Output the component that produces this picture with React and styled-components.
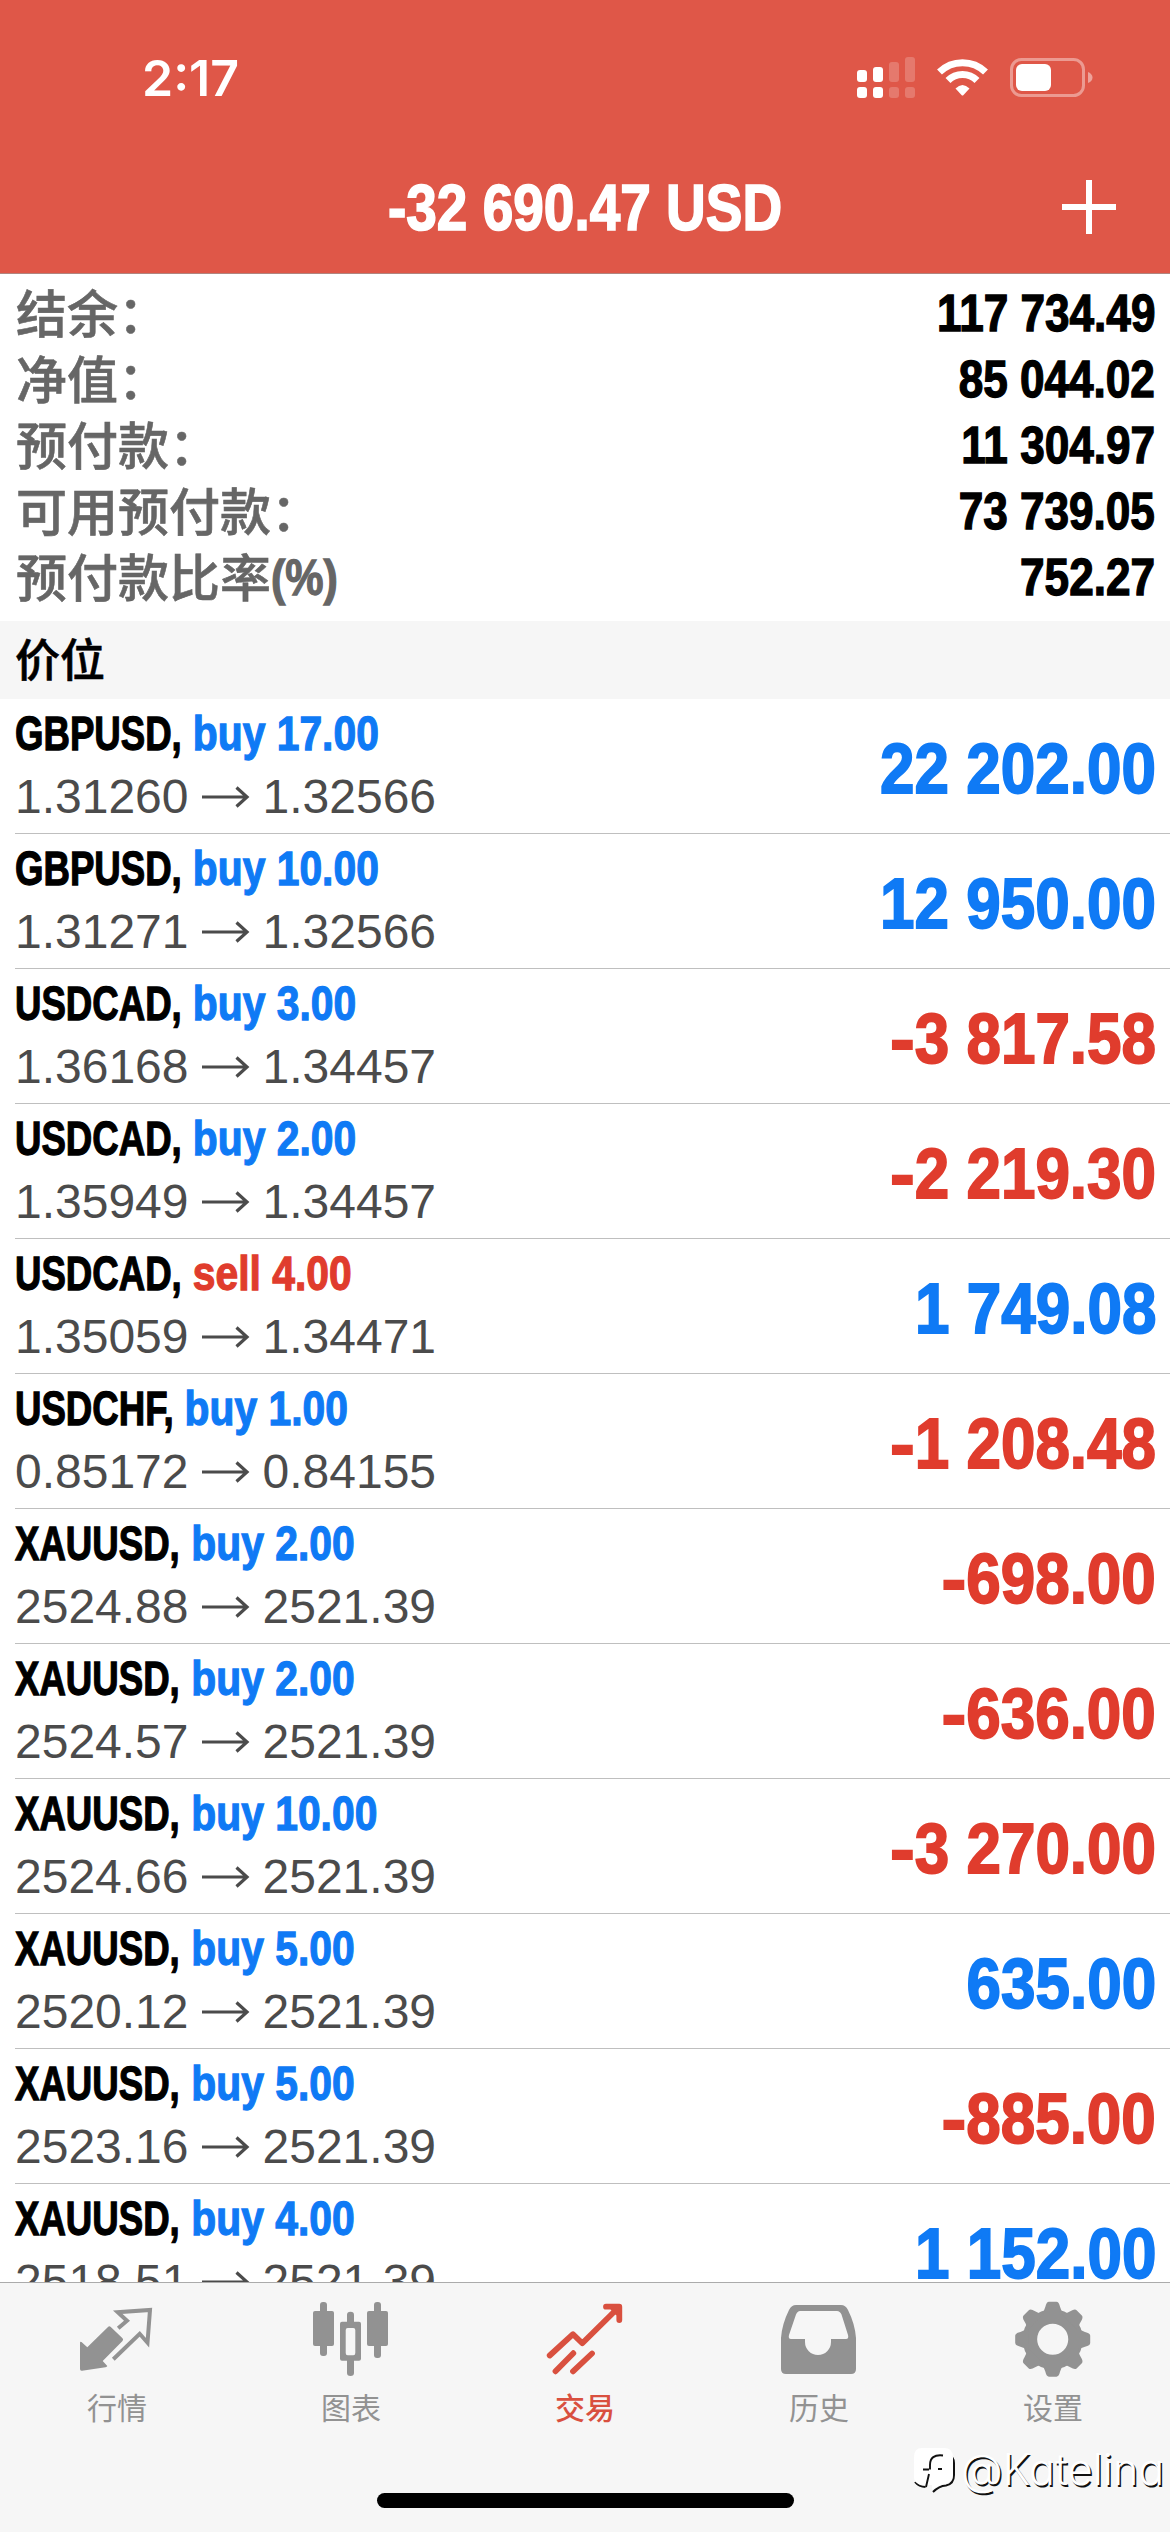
import React from 'react';
import styled, { createGlobalStyle } from 'styled-components';

const GlobalStyle = createGlobalStyle`
  * {
    box-sizing: border-box;
  }
  body {
    margin: 0;
    background: #fff;
    font-family: "Liberation Sans", "Noto Sans CJK SC", sans-serif;
  }
`;

const colors = {
  header: '#df5748',
  blue: '#0f7af5',
  red: '#e03c2d',
  grey: '#929292',
};

const Screen = styled.div`
  width: 1170px;
  height: 2532px;
  display: flex;
  flex-direction: column;
  overflow: hidden;
  background: #fff;
`;

/* Helvetica condensed look, squeezed from the regular width */
const Condensed = styled.span`
  display: inline-block;
  font-family: "Liberation Sans", sans-serif;
  font-weight: 700;
  white-space: nowrap;
  -webkit-text-stroke: 0.026em currentColor;
  transform: scaleX(${props => props.$scale || 0.85});
  transform-origin: ${props => props.$origin || 'left'} center;
`;

const Header = styled.header`
  flex: none;
  height: 274px;
  background: ${colors.header};
  border-bottom: 1px solid #b0857f;
  color: #fff;
`;

const StatusBar = styled.div`
  display: flex;
  justify-content: space-between;
  align-items: center;
  height: 156px;
  padding: 0 76px 0 142px;
`;

const Clock = styled.span`
  font-family: Inter, sans-serif;
  font-size: 50px;
  font-weight: 600;
  line-height: 60px;
`;

const StatusIcons = styled.svg`
  width: 240px;
  height: 48px;
`;

const TitleBar = styled.div`
  display: grid;
  grid-template-columns: 1fr auto 1fr;
  align-items: center;
  height: 104px;
  padding: 0 53px;
`;

const Title = styled(Condensed)`
  grid-column: 2;
  font-size: 65px;
  line-height: 80px;
`;

const AddIcon = styled.svg`
  justify-self: end;
  width: 56px;
  height: 56px;
`;

const Summary = styled.section`
  flex: none;
  height: 347px;
  padding: 7px 15px 0 16px;
`;

const SummaryRow = styled.div`
  display: flex;
  justify-content: space-between;
  height: 66px;
  line-height: 66px;
`;

const SummaryLabel = styled.span`
  display: flex;
  height: 66px;
  font-family: "Noto Sans CJK SC", sans-serif;
  font-size: 51px;
  font-weight: 500;
  line-height: 60px;
  color: #666;
  -webkit-text-stroke: 0.6px currentColor;
`;

const Percent = styled(Condensed)`
  font-size: 50px;
  line-height: 66px;
`;

const SummaryValue = styled(Condensed)`
  font-size: 51px;
  color: #000;
`;

const SectionTitle = styled.h2`
  flex: none;
  height: 78px;
  margin: 0;
  padding-left: 15px;
  background: #f6f6f6;
  font-family: "Noto Sans CJK SC", sans-serif;
  font-size: 45px;
  font-weight: 500;
  line-height: 74px;
  color: #000;
  -webkit-text-stroke: 0.6px currentColor;
`;

const Positions = styled.main`
  height: 1583px;
  overflow: hidden;
`;

const Position = styled.div`
  display: flex;
  justify-content: space-between;
  height: 135px;
  margin-left: 15px;
  padding-right: 14px;
  border-bottom: 1px solid #bfbfbf;
`;

const Details = styled.div`
  display: flex;
  flex-direction: column;
  padding-top: 4px;
`;

const Deal = styled(Condensed)`
  font-size: 49px;
  line-height: 60px;
  color: #000;
`;

const Side = styled.span`
  display: inline-block;
  margin-left: 15px;
  transform: scaleX(1.115);
  transform-origin: left center;
  color: ${props => (props.$sell ? colors.red : colors.blue)};
`;

const Prices = styled.div`
  display: flex;
  align-items: center;
  font-size: 48px;
  line-height: 68px;
  color: #4b4b4b;
`;

const Arrow = styled.svg`
  width: 74px;
  height: 24px;
`;

const Profit = styled(Condensed)`
  font-size: 71px;
  line-height: 139px;
  color: ${props => (props.$loss ? colors.red : colors.blue)};
`;

const Minus = styled.span`
  display: inline-block;
  transform: scaleX(1.2);
  transform-origin: right center;
`;

const TabBar = styled.nav`
  flex: none;
  display: grid;
  grid-template-columns: repeat(5, 1fr);
  height: 250px;
  padding-top: 17px;
  background: #f6f6f6;
  border-top: 1px solid #ababab;
`;

const Tab = styled.div`
  display: flex;
  flex-direction: column;
  align-items: center;
  height: 130px;
  font-family: "Noto Sans CJK SC", sans-serif;
  font-size: 30px;
  font-weight: ${props => (props.$active ? 500 : 400)};
  line-height: 52px;
  color: ${props => (props.$active ? '#d9503f' : colors.grey)};
`;

const TabIcon = styled.svg`
  flex: none;
  width: 80px;
  height: 80px;
`;

const HomeIndicator = styled.div`
  grid-column: 1 / -1;
  justify-self: center;
  align-self: end;
  width: 417px;
  height: 15px;
  margin-bottom: 24px;
  border-radius: 8px;
  background: #000;
`;

const Watermark = styled.div`
  position: absolute;
  left: 912px;
  top: 2439px;
  display: flex;
  align-items: center;
  gap: 5px;
  height: 60px;
  font-family: Inter, sans-serif;
  font-feature-settings: "cv11";
  font-size: 43px;
  font-weight: 300;
  letter-spacing: 0.1px;
  color: #fff;
  text-shadow: 1.5px 1.5px 0 #111;
`;

const summary = [
  { label: '结余：', value: '117 734.49' },
  { label: '净值：', value: '85 044.02' },
  { label: '预付款：', value: '11 304.97' },
  { label: '可用预付款：', value: '73 739.05' },
  { label: '预付款比率', suffix: '(%)', value: '752.27' },
];

const positions = [
  { symbol: 'GBPUSD', side: 'buy', volume: '17.00', open: '1.31260', price: '1.32566', profit: '22 202.00' },
  { symbol: 'GBPUSD', side: 'buy', volume: '10.00', open: '1.31271', price: '1.32566', profit: '12 950.00' },
  { symbol: 'USDCAD', side: 'buy', volume: '3.00', open: '1.36168', price: '1.34457', profit: '-3 817.58' },
  { symbol: 'USDCAD', side: 'buy', volume: '2.00', open: '1.35949', price: '1.34457', profit: '-2 219.30' },
  { symbol: 'USDCAD', side: 'sell', volume: '4.00', open: '1.35059', price: '1.34471', profit: '1 749.08' },
  { symbol: 'USDCHF', side: 'buy', volume: '1.00', open: '0.85172', price: '0.84155', profit: '-1 208.48' },
  { symbol: 'XAUUSD', side: 'buy', volume: '2.00', open: '2524.88', price: '2521.39', profit: '-698.00' },
  { symbol: 'XAUUSD', side: 'buy', volume: '2.00', open: '2524.57', price: '2521.39', profit: '-636.00' },
  { symbol: 'XAUUSD', side: 'buy', volume: '10.00', open: '2524.66', price: '2521.39', profit: '-3 270.00' },
  { symbol: 'XAUUSD', side: 'buy', volume: '5.00', open: '2520.12', price: '2521.39', profit: '635.00' },
  { symbol: 'XAUUSD', side: 'buy', volume: '5.00', open: '2523.16', price: '2521.39', profit: '-885.00' },
  { symbol: 'XAUUSD', side: 'buy', volume: '4.00', open: '2518.51', price: '2521.39', profit: '1 152.00' },
];

function QuotesIcon() {
  return (
    <TabIcon viewBox="0 0 80 80" fill="currentColor">
      <path d="M31 27Q32.3 25.5 33.8 27L45.5 38.3Q46.700 39.500 45.500 41L25.700 61L30.300 66Q30 67 28.500 67.200L5 70.700Q3 71 3 69V43Q3 41 4.500 42L10.300 47.300Z" />
      <path
        d="M41.200 28.300L50 20.800L40.700 12.200L73 9.900L70.500 42.700L62.700 33.800L36.300 59.300"
        fill="none"
        stroke="currentColor"
        strokeWidth="4"
      />
    </TabIcon>
  );
}

function ChartIcon() {
  return (
    <TabIcon viewBox="0 0 80 80" fill="currentColor">
      <rect x="2" y="11" width="21" height="35" rx="2" />
      <rect x="9" y="2" width="7" height="54" rx="3" />
      <path
        fillRule="evenodd"
        d="M31 21.7H36V15Q36 11.7 39.5 11.7T43 15V21.7H48Q50 21.7 50 23.7V58.7Q50 60.7 48 60.7H43V73Q43 76 39.5 76T36 73V60.7H31Q29 60.7 29 58.7V23.7Q29 21.7 31 21.7ZM36.7 28Q34.7 28 34.7 30V53Q34.7 55.3 36.7 55.3H42.3Q44.3 55.3 44.3 53V30Q44.3 28 42.3 28Z"
      />
      <rect x="56" y="11" width="21" height="35" rx="2" />
      <rect x="63" y="2" width="7" height="56" rx="3" />
    </TabIcon>
  );
}

function TradeIcon() {
  return (
    <TabIcon
      viewBox="0 0 80 80"
      fill="none"
      stroke="currentColor"
      strokeWidth="5.8"
      strokeLinecap="round"
      strokeLinejoin="round"
    >
      <path d="M4.7 55.5L28 34.2L37.3 43.3L74 7M61 6.7H74.3V20M67 7L74 14M10.5 71.3L28.3 53.2M28 71.3L47 53.5" />
    </TabIcon>
  );
}

function HistoryIcon() {
  return (
    <TabIcon viewBox="0 0 80 80" fill="currentColor">
      <path
        fillRule="evenodd"
        d="M2 38Q3 24 10 10Q12.5 5 17 5H62Q66.5 5 69 10Q76 24 77 38V69Q77 74 72 74H7Q2 74 2 69ZM21 11Q18.5 11 17 14.5L10 35Q9 39 12 39H26V42A13 13 0 0 0 52 42V39H67Q70 39 69 35L62.5 14.5Q61 11 58 11Z"
      />
    </TabIcon>
  );
}

const gearTeeth = [0, 45, 90, 135, 180, 225, 270, 315];

function SettingsIcon() {
  return (
    <TabIcon viewBox="0 0 80 80" fill="none" stroke="currentColor">
      <circle cx="39.7" cy="39.3" r="22.8" strokeWidth="14.5" />
      {gearTeeth.map(angle => (
        <path
          key={angle}
          d="M27.5 15Q31.5 11.5 32.3 7Q33.500 1.800 36 1.800H43.400Q45.900 1.800 47.100 7Q47.900 11.500 51.900 15Z"
          transform={`rotate(${angle} 39.7 39.3)`}
          fill="currentColor"
          stroke="none"
        />
      ))}
    </TabIcon>
  );
}

const tabs = [
  { name: '行情', icon: QuotesIcon },
  { name: '图表', icon: ChartIcon },
  { name: '交易', icon: TradeIcon, active: true },
  { name: '历史', icon: HistoryIcon },
  { name: '设置', icon: SettingsIcon },
];

function StatusGlyphs() {
  return (
    <StatusIcons viewBox="853 54 240 48" fill="#fff">
      <rect x="856" y="70" width="10" height="12" rx="3" />
      <rect x="872" y="67" width="10" height="15" rx="3" />
      <rect x="856" y="87" width="10" height="11" rx="3" />
      <rect x="872" y="87" width="10" height="11" rx="3" />
      <g opacity="0.2">
        <rect x="888" y="62" width="10" height="20" rx="3" />
        <rect x="904" y="57" width="10" height="25" rx="3" />
        <rect x="888" y="87" width="10" height="11" rx="3" />
        <rect x="904" y="87" width="10" height="11" rx="3" />
      </g>
      <g fill="none" stroke="#fff" strokeWidth="7">
        <path d="M938.5 72A33 33 0 0 1 984.5 72" />
        <path d="M947 80.5A20.5 20.5 0 0 1 976 80.5" />
      </g>
      <path d="M954.5 88.5Q961.5 81.5 968.5 88.5L962.5 95Q961.5 96 960.5 95Z" />
      <rect x="1010.5" y="59.5" width="72" height="36" rx="10" fill="none" stroke="#fff" strokeOpacity="0.4" strokeWidth="3" />
      <rect x="1015" y="64" width="35" height="27" rx="6" />
      <path d="M1087 72Q1091.5 74 1091.5 77.5T1087 83Z" opacity="0.45" />
    </StatusIcons>
  );
}

function ProfitValue({ value }) {
  const loss = value.startsWith('-');
  return (
    <Profit $scale={0.873} $origin="right" $loss={loss}>
      {loss && <Minus>-</Minus>}
      {loss ? value.slice(1) : value}
    </Profit>
  );
}

function App() {
  return (
    <Screen>
      <GlobalStyle />
      <Header>
        <StatusBar>
          <Clock>2:17</Clock>
          <StatusGlyphs />
        </StatusBar>
        <TitleBar>
          <Title $scale={0.846} $origin="center">-32 690.47 USD</Title>
          <AddIcon viewBox="0 0 56 56" stroke="#fff" strokeWidth="6">
            <path d="M28 0V54M1 27H55" />
          </AddIcon>
        </TitleBar>
      </Header>

      <Summary>
        {summary.map(row => (
          <SummaryRow key={row.label}>
            <SummaryLabel>
              {row.label}
              {row.suffix && <Percent $scale={0.86}>{row.suffix}</Percent>}
            </SummaryLabel>
            <SummaryValue $scale={0.865} $origin="right">{row.value}</SummaryValue>
          </SummaryRow>
        ))}
      </Summary>

      <SectionTitle>价位</SectionTitle>

      <Positions>
        {positions.map((item, index) => (
          <Position key={index}>
            <Details>
              <Deal $scale={0.747}>
                {item.symbol},
                <Side $sell={item.side === 'sell'}>{item.side} {item.volume}</Side>
              </Deal>
              <Prices>
                {item.open}
                <Arrow viewBox="0 0 74 24" fill="none" stroke="currentColor" strokeWidth="3.200">
                  <path d="M13 12H58M47.5 2.5L58 12L47.5 21.5" />
                </Arrow>
                {item.price}
              </Prices>
            </Details>
            <ProfitValue value={item.profit} />
          </Position>
        ))}
      </Positions>

      <TabBar>
        {tabs.map(({ name, icon: Icon, active }) => (
          <Tab key={name} $active={active}>
            <Icon />
            {name}
          </Tab>
        ))}
        <HomeIndicator />
      </TabBar>

      <Watermark>
        <svg width="44" height="52" viewBox="0 0 44 52">
          <path d="M36 12Q42 14 42 20V32Q42 41 34 42.500Q27 43 21 49M3 39Q7 44 13.500 44" fill="none" stroke="#111" strokeWidth="2" />
          <path d="M10 5H32Q41 5 41 14V31Q41 39 33 41Q26 42 20 47V42L14 42Q2 42 2 34V14Q2 5 10 5Z" fill="#fff" />
          <path d="M31 12.500Q18 11 18 22V26.500M11 26.500H17M26 26H30M17 31L14 44" fill="none" stroke="#111" strokeWidth="1.900" />
        </svg>
        <span>@Katelina</span>
      </Watermark>
    </Screen>
  );
}

export default App;
